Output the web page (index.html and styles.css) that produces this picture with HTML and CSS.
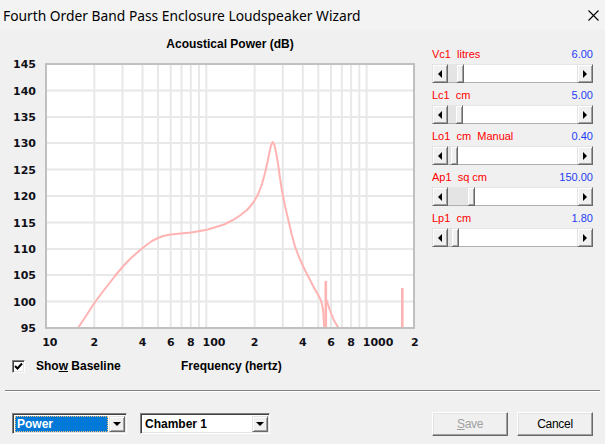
FILE: index.html
```html
<!DOCTYPE html>
<html>
<head>
<meta charset="utf-8">
<title>Fourth Order Band Pass Enclosure Loudspeaker Wizard</title>
<link rel="stylesheet" href="styles.css">
</head>
<body>
<div class="window">
  <div class="titlebar">
    <span class="title">Fourth Order Band Pass Enclosure Loudspeaker Wizard</span>
    <svg class="close" width="11" height="11" viewBox="0 0 11 11"><path d="M0.5 0.5 L10.5 10.5 M10.5 0.5 L0.5 10.5" stroke="#000" stroke-width="1.1" fill="none"/></svg>
  </div>
  <div class="content">
    <div class="chart-col">
      <svg class="chart" width="420" height="325" viewBox="0 30 420 325">
        <text class="chart-title" x="230" y="48" text-anchor="middle">Acoustical Power (dB)</text>
        <rect x="46" y="64" width="368" height="264" fill="#fff" stroke="none"/>
        <g class="grid">
          <line x1="94.3" y1="64" x2="94.3" y2="328"/>
          <line x1="122.5" y1="64" x2="122.5" y2="328"/>
          <line x1="142.5" y1="64" x2="142.5" y2="328"/>
          <line x1="158" y1="64" x2="158" y2="328"/>
          <line x1="170.7" y1="64" x2="170.7" y2="328"/>
          <line x1="181.5" y1="64" x2="181.5" y2="328"/>
          <line x1="190.8" y1="64" x2="190.8" y2="328"/>
          <line x1="199" y1="64" x2="199" y2="328"/>
          <line x1="206.3" y1="64" x2="206.3" y2="328"/>
          <line x1="254.6" y1="64" x2="254.6" y2="328"/>
          <line x1="282.8" y1="64" x2="282.8" y2="328"/>
          <line x1="302.8" y1="64" x2="302.8" y2="328"/>
          <line x1="318.3" y1="64" x2="318.3" y2="328"/>
          <line x1="331" y1="64" x2="331" y2="328"/>
          <line x1="341.8" y1="64" x2="341.8" y2="328"/>
          <line x1="351.1" y1="64" x2="351.1" y2="328"/>
          <line x1="359.3" y1="64" x2="359.3" y2="328"/>
          <line x1="366.6" y1="64" x2="366.6" y2="328"/>
          <line x1="46" y1="90.5" x2="414" y2="90.5"/>
          <line x1="46" y1="117" x2="414" y2="117"/>
          <line x1="46" y1="143" x2="414" y2="143"/>
          <line x1="46" y1="169.5" x2="414" y2="169.5"/>
          <line x1="46" y1="196" x2="414" y2="196"/>
          <line x1="46" y1="222.5" x2="414" y2="222.5"/>
          <line x1="46" y1="249" x2="414" y2="249"/>
          <line x1="46" y1="275" x2="414" y2="275"/>
          <line x1="46" y1="301.5" x2="414" y2="301.5"/>
        </g>
        <g class="curve">
          <polyline points="78,328 86,316 94,303.5 101,294 108,285 115,276 122,267.5 129,260 135,254.5 142,248.5 147,244.5 152,241 157,238.5 163,236 171,234.5 181,233.5 191,232.5 200,231 208,229.5 216,227 224,224.5 233,220 240,215.5 247,210 253,203 258,194.5 262,184 265,173 267.5,162 269.5,152 271,145.5 272.7,142 274.3,144.5 276,152 278,163.5 280,178 282,191 285,206 288.3,220 291.5,233.5 295,246.7 299,257 303.3,266.7 307.5,275 311.7,283.3 315,289.5 318.3,295 320.5,299.5 322,304 323.3,312 324.2,328"/>
          <polyline points="326.5,300 328.5,306 331,313 334,320.5 338.5,328"/>
        </g>
        <rect class="spike" x="324.5" y="281" width="2.6" height="47"/>
        <rect class="spike" x="401" y="288" width="2.6" height="40"/>
        <rect x="46" y="64" width="368" height="264" fill="none" stroke="#c0c0c0" stroke-width="2"/>
        <g class="ylab">
          <text x="36" y="68">145</text>
          <text x="36" y="94.5">140</text>
          <text x="36" y="121">135</text>
          <text x="36" y="147">130</text>
          <text x="36" y="173.5">125</text>
          <text x="36" y="200">120</text>
          <text x="36" y="226.5">115</text>
          <text x="36" y="253">110</text>
          <text x="36" y="279">105</text>
          <text x="36" y="305.5">100</text>
          <text x="36" y="332">95</text>
        </g>
        <g class="xlab">
          <text x="42.2" y="346">10</text>
          <text x="90.5" y="346">2</text>
          <text x="138.7" y="346">4</text>
          <text x="166.9" y="346">6</text>
          <text x="187" y="346">8</text>
          <text x="202.5" y="346">100</text>
          <text x="250.8" y="346">2</text>
          <text x="299" y="346">4</text>
          <text x="327.2" y="346">6</text>
          <text x="347.3" y="346">8</text>
          <text x="362.8" y="346">1000</text>
          <text x="411.1" y="346">2</text>
        </g>
      </svg>
      <div class="chart-foot">
        <span class="checkbox"><svg width="9" height="9" viewBox="0 0 9 9"><path d="M1 4 L3.5 6.5 L8 1.5" stroke="#000" stroke-width="2" fill="none"/></svg></span>
        <span class="show">Sho<u>w</u> Baseline</span>
        <span class="freq">Frequency (hertz)</span>
      </div>
    </div>
    <div class="sliders">
      <div class="slider">
        <div class="slider-label"><span class="name">Vc1  litres</span><span class="value">6.00</span></div>
        <div class="scrollbar"><span class="sb-btn"><i class="arr-left"></i></span><span class="sb-track"><span class="sb-fill" style="width:8px"></span><span class="sb-thumb"></span></span><span class="sb-btn"><i class="arr-right"></i></span></div>
      </div>
      <div class="slider">
        <div class="slider-label"><span class="name">Lc1  cm</span><span class="value">5.00</span></div>
        <div class="scrollbar"><span class="sb-btn"><i class="arr-left"></i></span><span class="sb-track"><span class="sb-fill" style="width:7px"></span><span class="sb-thumb"></span></span><span class="sb-btn"><i class="arr-right"></i></span></div>
      </div>
      <div class="slider">
        <div class="slider-label"><span class="name">Lo1  cm  Manual</span><span class="value">0.40</span></div>
        <div class="scrollbar"><span class="sb-btn"><i class="arr-left"></i></span><span class="sb-track"><span class="sb-fill" style="width:2px"></span><span class="sb-thumb"></span></span><span class="sb-btn"><i class="arr-right"></i></span></div>
      </div>
      <div class="slider">
        <div class="slider-label"><span class="name">Ap1  sq cm</span><span class="value">150.00</span></div>
        <div class="scrollbar"><span class="sb-btn"><i class="arr-left"></i></span><span class="sb-track"><span class="sb-fill" style="width:19px"></span><span class="sb-thumb"></span></span><span class="sb-btn"><i class="arr-right"></i></span></div>
      </div>
      <div class="slider">
        <div class="slider-label"><span class="name">Lp1  cm</span><span class="value">1.80</span></div>
        <div class="scrollbar"><span class="sb-btn"><i class="arr-left"></i></span><span class="sb-track"><span class="sb-fill" style="width:3px"></span><span class="sb-thumb"></span></span><span class="sb-btn"><i class="arr-right"></i></span></div>
      </div>
    </div>
  </div>
  <div class="separator"></div>
  <div class="bottom">
    <div class="combo combo-power"><span class="combo-field sel">Power</span><span class="dd-btn"><i class="arr-down"></i></span></div>
    <div class="combo combo-chamber"><span class="combo-field">Chamber 1</span><span class="dd-btn"><i class="arr-down"></i></span></div>
    <div class="spacer"></div>
    <div class="btn disabled"><u>S</u>ave</div>
    <div class="btn cancel">Cancel</div>
  </div>
</div>
</body>
</html>
```
FILE: styles.css
```css
html, body {
  margin: 0;
  padding: 0;
}
body {
  width: 605px;
  height: 444px;
  overflow: hidden;
  background: #f0f0f0;
  font-family: "Liberation Sans", Arial, sans-serif;
  color: #000;
}
.window {
  width: 605px;
  height: 444px;
}
.titlebar {
  height: 30px;
  box-sizing: border-box;
  background: #f3f3f3;
  display: flex;
  align-items: center;
  justify-content: space-between;
  padding: 0 6px 0 3px;
}
.title {
  font-family: "Noto Sans", "Open Sans", sans-serif;
  font-size: 13.8px;
  color: #000;
}
.close {
  display: block;
}
.content {
  display: flex;
  height: 347px;
}
.chart-col {
  width: 420px;
  display: flex;
  flex-direction: column;
}
.chart {
  display: block;
}
.chart-title {
  font-family: "Liberation Sans", Arial, sans-serif;
  font-weight: bold;
  font-size: 12px;
  fill: #000;
}
.grid line {
  stroke: #e8e8e8;
  stroke-width: 2;
}
.curve polyline {
  fill: none;
  stroke: #ffb3b3;
  stroke-width: 2;
  stroke-linejoin: round;
}
.spike {
  fill: #ffb3b3;
}
.ylab text {
  font-family: "DejaVu Sans", sans-serif;
  font-weight: bold;
  font-size: 11px;
  fill: #101018;
  text-anchor: end;
}
.xlab text {
  font-family: "DejaVu Sans", sans-serif;
  font-weight: bold;
  font-size: 11px;
  fill: #101018;
}
.chart-foot {
  height: 22px;
  display: flex;
  align-items: center;
}
.checkbox {
  width: 13px;
  height: 13px;
  margin-left: 12px;
  box-sizing: border-box;
  background: #fff;
  border-top: 1px solid #808080;
  border-left: 1px solid #808080;
  border-right: 1px solid #fff;
  border-bottom: 1px solid #fff;
  box-shadow: inset 1px 1px 0 #404040, inset -1px -1px 0 #e3e3e3;
  display: flex;
  align-items: center;
  justify-content: center;
}
.checkbox svg {
  display: block;
}
.show {
  margin-left: 11px;
  width: 145px;
  font-weight: bold;
  font-size: 12px;
}
.freq {
  font-weight: bold;
  font-size: 12px;
}
.sliders {
  width: 161px;
  margin-left: 12px;
  margin-top: 12px;
}
.slider-label {
  display: flex;
  justify-content: space-between;
  height: 22px;
  line-height: 24px;
  font-size: 11px;
}
.name {
  color: #ff0000;
  white-space: pre;
}
.value {
  color: #1f3cf5;
}
.scrollbar {
  display: flex;
  height: 19px;
}
.sb-btn {
  width: 16px;
  height: 19px;
  box-sizing: border-box;
  background: #f0f0f0;
  border-top: 1px solid #e3e3e3;
  border-left: 1px solid #e3e3e3;
  border-right: 1px solid #696969;
  border-bottom: 1px solid #696969;
  box-shadow: inset 1px 1px 0 #fff, inset -1px -1px 0 #a0a0a0;
  display: flex;
  align-items: center;
  justify-content: center;
}
.arr-left, .arr-right, .arr-down {
  display: block;
  width: 0;
  height: 0;
}
.arr-left {
  border-top: 4px solid transparent;
  border-bottom: 4px solid transparent;
  border-right: 4px solid #000;
}
.arr-right {
  border-top: 4px solid transparent;
  border-bottom: 4px solid transparent;
  border-left: 4px solid #000;
}
.arr-down {
  border-left: 4px solid transparent;
  border-right: 4px solid transparent;
  border-top: 4px solid #000;
}
.sb-track {
  flex: 1;
  display: flex;
  background: #fff;
  box-sizing: border-box;
  border-top: 1px solid #e6e6e6;
  border-bottom: 1px solid #b0b0b0;
}
.sb-fill {
  display: block;
  background: #e4e4e4;
}
.sb-thumb {
  display: block;
  width: 8px;
  margin-top: -1px;
  margin-bottom: -1px;
  box-sizing: border-box;
  background: #f0f0f0;
  border-top: 1px solid #e3e3e3;
  border-left: 1px solid #e3e3e3;
  border-right: 1px solid #696969;
  border-bottom: 1px solid #696969;
  box-shadow: inset 1px 1px 0 #fff, inset -1px -1px 0 #a0a0a0;
}
.separator {
  margin: 13px 5px 0;
  height: 1px;
  background: #808080;
  border-bottom: 1px solid #fff;
}
.bottom {
  display: flex;
  align-items: flex-start;
  margin-top: 20px;
  padding: 0 12px;
}
.combo {
  margin-top: 1px;
  height: 21px;
  display: flex;
  box-sizing: border-box;
  background: #fff;
  border-top: 1px solid #808080;
  border-left: 1px solid #808080;
  border-right: 1px solid #fff;
  border-bottom: 1px solid #fff;
  box-shadow: inset 1px 1px 0 #404040, inset -1px -1px 0 #e3e3e3;
  padding: 2px 1px 1px 2px;
}
.combo-power {
  width: 115px;
}
.combo-chamber {
  width: 130px;
  margin-left: 13px;
}
.combo-field {
  flex: 1;
  font-weight: bold;
  font-size: 12px;
  line-height: 17px;
  padding-left: 2px;
  margin-right: 1px;
}
.combo-field.sel {
  background: #0078d7;
  color: #fff;
  outline: 1px dotted #f0c070;
  outline-offset: -1px;
}
.dd-btn {
  width: 16px;
  box-sizing: border-box;
  background: #f0f0f0;
  border-top: 1px solid #e3e3e3;
  border-left: 1px solid #e3e3e3;
  border-right: 1px solid #696969;
  border-bottom: 1px solid #696969;
  box-shadow: inset 1px 1px 0 #fff, inset -1px -1px 0 #a0a0a0;
  display: flex;
  align-items: center;
  justify-content: center;
}
.spacer {
  flex: 1;
}
.btn {
  width: 76px;
  height: 24px;
  box-sizing: border-box;
  background: #f0f0f0;
  border-top: 1px solid #fff;
  border-left: 1px solid #fff;
  border-right: 1px solid #696969;
  border-bottom: 1px solid #696969;
  box-shadow: inset -1px -1px 0 #a0a0a0, inset 1px 1px 0 #e3e3e3;
  display: flex;
  align-items: center;
  justify-content: center;
  font-size: 12px;
  letter-spacing: -0.3px;
}
.btn.disabled {
  color: #a0a0a0;
}
.btn.cancel {
  margin-left: 9px;
}
```
